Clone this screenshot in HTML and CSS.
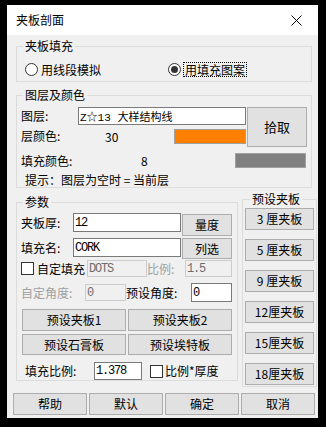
FILE: index.html
```html
<!DOCTYPE html>
<html lang="zh-CN">
<head>
    <meta charset="UTF-8">
    <title>夹板剖面</title>
    <link rel="stylesheet" href="styles.css">
</head>
<body>
    <div class="window">
        <div class="titlebar">
            <span class="title">夹板剖面</span>
            <svg class="close" width="11" height="11" viewBox="0 0 11 11">
                <path d="M0.5 0.5 L10.5 10.5 M10.5 0.5 L0.5 10.5" stroke="#000" stroke-width="1" fill="none"/>
            </svg>
        </div>

        <div class="client">
            <fieldset class="group g-fill">
                <legend>夹板填充</legend>
                <div class="fill-inner">
                    <label class="radio"><span class="rdot"></span>用线段模拟</label>
                    <label class="radio checked"><span class="rdot"></span><span class="focus">用填充图案</span></label>
                </div>
            </fieldset>

            <fieldset class="group g-layer">
                <legend>图层及颜色</legend>
                <div class="layer-inner">
                    <div class="layer-grid">
                        <span class="lbl">图层:</span>
                        <input class="edit" value="Z☆13 大样结构线">
                        <button class="btn pick">拾取</button>
                        <span class="lbl">层颜色:</span>
                        <div class="colrow">
                            <span class="num30">30</span>
                            <span class="swatch orange"></span>
                        </div>
                    </div>
                    <div class="fillcol">
                        <span class="lbl fc-lbl">填充颜色:</span>
                        <span>8</span>
                        <span class="swatch gray"></span>
                    </div>
                    <div class="hint">提示：图层为空时 = 当前层</div>
                </div>
            </fieldset>

            <div class="lower">
                <fieldset class="group g-param">
                    <legend>参数</legend>
                    <div class="param-inner">
                        <div class="prow r1">
                            <span class="lbl w52">夹板厚:</span>
                            <input class="edit ascii e108" value="12">
                            <button class="btn b50 b-r1">量度</button>
                        </div>
                        <div class="prow r2">
                            <span class="lbl w52">填充名:</span>
                            <input class="edit ascii e108" value="CORK">
                            <button class="btn b50">列选</button>
                        </div>
                        <div class="prow r3">
                            <span class="chk"></span>
                            <span>自定填充</span>
                            <input class="edit ascii e60" value="DOTS" disabled>
                            <span class="dim">比例:</span>
                            <input class="edit ascii e47 push" value="1.5" disabled>
                        </div>
                        <div class="prow r4">
                            <span class="dim w64">自定角度:</span>
                            <input class="edit ascii e41" value="0" disabled>
                            <span>预设角度:</span>
                            <input class="edit ascii e41 push" value="0">
                        </div>
                        <div class="prow r5">
                            <button class="btn b104">预设夹板1</button>
                            <button class="btn b104">预设夹板2</button>
                        </div>
                        <div class="prow r6">
                            <button class="btn b104">预设石膏板</button>
                            <button class="btn b104">预设埃特板</button>
                        </div>
                        <div class="prow r7">
                            <span class="lbl w69">填充比例:</span>
                            <input class="edit ascii e48" value="1.378">
                            <span class="chk chk2"></span>
                            <span>比例*厚度</span>
                        </div>
                    </div>
                </fieldset>

                <fieldset class="group g-preset">
                    <legend>预设夹板</legend>
                    <div class="preset-inner">
                        <button class="btn">3 厘夹板</button>
                        <button class="btn">5 厘夹板</button>
                        <button class="btn">9 厘夹板</button>
                        <button class="btn">12厘夹板</button>
                        <button class="btn">15厘夹板</button>
                        <button class="btn">18厘夹板</button>
                    </div>
                </fieldset>
            </div>

            <div class="footer">
                <button class="btn">帮助</button>
                <button class="btn">默认</button>
                <button class="btn">确定</button>
                <button class="btn">取消</button>
            </div>
        </div>
    </div>
</body>
</html>
```

FILE: styles.css
```css
* {
    box-sizing: border-box;
}

body {
    margin: 0;
    background-color: #000;
    font-family: "Noto Sans CJK SC", sans-serif;
    font-size: 12px;
    color: #000;
}

.window {
    width: 311px;
    height: 413px;
    margin: 5px 0 0 7px;
    background-color: #f0f0f0;
}

.titlebar {
    height: 30px;
    background-color: #fff;
    display: flex;
    align-items: center;
    justify-content: space-between;
    padding: 0 16px 0 9px;
}
.title {
    line-height: 14px;
}

/* group boxes */
.group {
    padding: 0;
    min-width: 0;
    border: 1px solid #dcdcdc;
}
.group legend {
    padding: 0 2px;
    margin-left: 6px;
    line-height: 14px;
    height: 14px;
}

.lbl, .dim, .prow span {
    line-height: 14px;
    white-space: nowrap;
}
.dim {
    color: #a0a0a0;
}

/* controls */
.btn {
    margin: 0;
    padding: 0;
    background-color: #e1e1e1;
    border: 1px solid #adadad;
    font-family: "Noto Sans CJK SC", sans-serif;
    font-size: 12px;
    color: #000;
    line-height: 14px;
}

.edit {
    margin: 0;
    padding: 0 1px;
    height: 19px;
    border: 1px solid #7a7a7a;
    background-color: #fff;
    font-family: "Liberation Mono", "Noto Sans CJK SC", monospace;
    font-size: 11px;
    color: #000;
    outline: none;
}
.edit.ascii {
    font-size: 12px;
    letter-spacing: -1.2px;
}
.edit:disabled {
    background-color: #f0f0f0;
    border-color: #cccccc;
    color: #6d6d6d;
    height: 17px;
}

.chk {
    width: 13px;
    height: 13px;
    border: 1px solid #333;
    background-color: #fff;
    margin-right: 3px;
}

/* 夹板填充 */
.g-fill {
    margin: 4px 6px 0 9px;
}
.fill-inner {
    display: grid;
    grid-template-columns: 143px auto;
    align-items: center;
    padding: 9px 0 4px 8px;
    height: 28px;
}
.radio {
    display: flex;
    align-items: center;
    line-height: 14px;
}
.rdot {
    width: 13px;
    height: 13px;
    border: 1px solid #333;
    border-radius: 50%;
    background-color: #fff;
    margin-right: 3px;
    display: flex;
    align-items: center;
    justify-content: center;
}
.checked .rdot {
    margin-right: 2px;
}
.checked .rdot::after {
    content: "";
    width: 7px;
    height: 7px;
    border-radius: 50%;
    background-color: #333;
}
.focus {
    border: 1px dotted #000;
    padding: 0 1px;
    line-height: 13px;
}

/* 图层及颜色 */
.g-layer {
    margin: 6px 6px 0 9px;
}
.layer-inner {
    padding: 5px 5px 0 4px;
}
.layer-grid {
    display: grid;
    grid-template-columns: 56px 168px 60px;
    grid-template-rows: 18px 22px;
    column-gap: 1px;
    align-items: center;
}
.layer-grid .edit {
    height: 18px;
    width: 168px;
}
.pick {
    grid-column: 3;
    grid-row: 1 / 3;
    height: 40px;
    font-size: 13px;
}
.colrow {
    display: flex;
    align-items: center;
    padding-top: 1px;
}
.num30 {
    margin-left: 27px;
}
.swatch {
    height: 15px;
    border: 1px solid #a0a0a0;
}
.orange {
    width: 72px;
    margin-left: auto;
    background-color: #ff8000;
}
.fillcol {
    display: flex;
    align-items: center;
    height: 17px;
    margin-top: 5px;
}
.fc-lbl {
    width: 120px;
}
.gray {
    width: 71px;
    margin-left: auto;
    background-color: #808080;
}
.hint {
    margin-top: 4px;
    padding-left: 4px;
    line-height: 14px;
}

/* lower part */
.lower {
    display: flex;
    align-items: flex-start;
    margin-left: 9px;
}

.g-param {
    width: 222px;
    margin: 7px 0 0 0;
}
.param-inner {
    padding: 4px 5px 0 4px;
}
.prow {
    display: flex;
    align-items: center;
}
.r1 { height: 23px; align-items: flex-start; }
.r1 .lbl { line-height: 19px; }
.b-r1 { margin-top: 1px; }
.r2 { height: 21px; margin-top: 2px; align-items: flex-start; }
.r2 .lbl { line-height: 19px; }
.r3 { height: 17px; margin-top: 1px; }
.r4 { height: 17px; margin-top: 7px; }
.r5 { height: 22px; margin-top: 8px; padding-left: 1px; gap: 2px; }
.r6 { height: 21px; margin-top: 3px; padding-left: 1px; gap: 2px; }
.r7 { height: 18px; margin-top: 7px; padding-left: 4px; }

.w52 { width: 52px; }
.w64 { width: 64px; }
.w69 { width: 69px; }
.e108 { width: 108px; }
.e60 { width: 60px; margin-left: 2px; }
.e47 { width: 47px; }
.e41 { width: 41px; }
.e48 { width: 48px; height: 18px; }
.push { margin-left: auto; }
.b50 { width: 50px; height: 22px; margin-left: 1px; }
.r2 .b50 { height: 21px; }
.b104 { width: 104px; height: 100%; }
.chk2 { margin-left: 8px; margin-right: 2px; }

.g-preset {
    width: 75px;
    margin: 4px 0 0 4px;
}
.g-preset legend {
    margin-left: 7px;
}
.preset-inner {
    display: flex;
    flex-direction: column;
    gap: 9px;
    padding: 2px 1px 1px 2px;
}
.preset-inner .btn {
    width: 69px;
    height: 22px;
}

.footer {
    display: grid;
    grid-template-columns: repeat(4, 74px);
    gap: 2px;
    margin-top: 6px;
    padding-left: 6px;
}
.footer .btn {
    height: 22px;
}
```
